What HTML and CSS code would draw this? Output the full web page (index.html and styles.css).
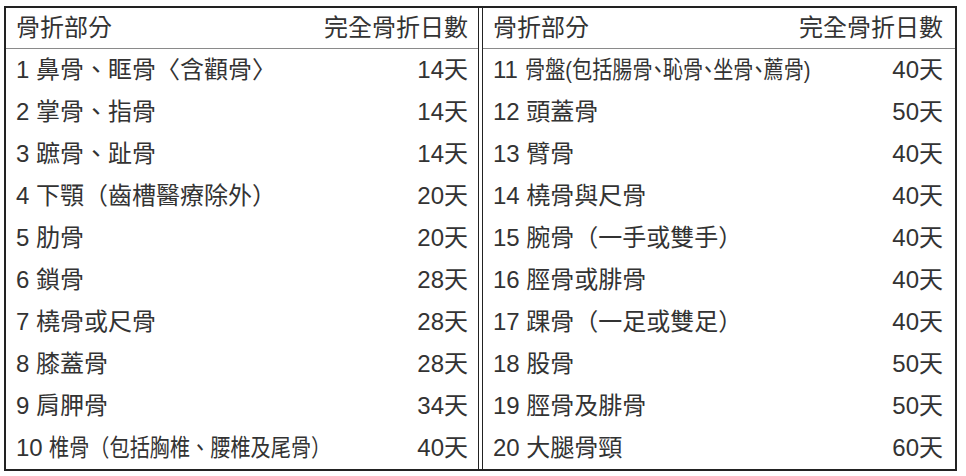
FILE: index.html
```html
<!DOCTYPE html>
<html lang="zh-Hant">
<head>
<meta charset="utf-8">
<title>骨折部分</title>
<link rel="stylesheet" href="styles.css">
</head>
<body>
<div class="sheet">
  <section class="half">
    <div class="row head"><span class="label">骨折部分</span><span class="days">完全骨折日數</span></div>
    <div class="row"><span class="label">1 鼻骨、眶骨〈含顴骨〉</span><span class="days">14天</span></div>
    <div class="row"><span class="label">2 掌骨、指骨</span><span class="days">14天</span></div>
    <div class="row"><span class="label">3 蹠骨、趾骨</span><span class="days">14天</span></div>
    <div class="row"><span class="label">4 下顎（齒槽醫療除外）</span><span class="days">20天</span></div>
    <div class="row"><span class="label">5 肋骨</span><span class="days">20天</span></div>
    <div class="row"><span class="label">6 鎖骨</span><span class="days">28天</span></div>
    <div class="row"><span class="label">7 橈骨或尺骨</span><span class="days">28天</span></div>
    <div class="row"><span class="label">8 膝蓋骨</span><span class="days">28天</span></div>
    <div class="row"><span class="label">9 肩胛骨</span><span class="days">34天</span></div>
    <div class="row"><span class="label">10 <span class="squeeze s10">椎骨（包括胸椎、腰椎及尾骨）</span></span><span class="days">40天</span></div>
  </section>
  <section class="half">
    <div class="row head"><span class="label">骨折部分</span><span class="days">完全骨折日數</span></div>
    <div class="row"><span class="label">11 <span class="squeeze s11">骨盤(包括腸骨、恥骨、坐骨、薦骨)</span></span><span class="days">40天</span></div>
    <div class="row"><span class="label">12 頭蓋骨</span><span class="days">50天</span></div>
    <div class="row"><span class="label">13 臂骨</span><span class="days">40天</span></div>
    <div class="row"><span class="label">14 橈骨與尺骨</span><span class="days">40天</span></div>
    <div class="row"><span class="label">15 腕骨（一手或雙手）</span><span class="days">40天</span></div>
    <div class="row"><span class="label">16 脛骨或腓骨</span><span class="days">40天</span></div>
    <div class="row"><span class="label">17 踝骨（一足或雙足）</span><span class="days">40天</span></div>
    <div class="row"><span class="label">18 股骨</span><span class="days">50天</span></div>
    <div class="row"><span class="label">19 脛骨及腓骨</span><span class="days">50天</span></div>
    <div class="row"><span class="label">20 大腿骨頸</span><span class="days">60天</span></div>
  </section>
</div>
</body>
</html>
```
FILE: styles.css
```css
html, body {
  margin: 0;
  padding: 0;
}
body {
  background: #ffffff;
  font-family: "Liberation Sans", "Noto Sans CJK TC", sans-serif;
  color: #333333;
  width: 966px;
  height: 476px;
  overflow: hidden;
}
.sheet {
  margin: 6px 0 0 4px;
  width: 953px;
  box-sizing: border-box;
  border: 2px solid #222222;
  display: grid;
  grid-template-columns: 1fr 1fr;
  column-gap: 3px;
  background: #ffffff;
}
.half {
  display: flex;
  flex-direction: column;
}
.half:first-child {
  border-right: 1px solid #222222;
}
.half:last-child {
  border-left: 1px solid #222222;
}
.row {
  display: flex;
  align-items: center;
  justify-content: space-between;
  height: 42px;
  padding: 0 10px 0 10px;
  font-size: 24px;
  line-height: 1;
  white-space: nowrap;
}
.half:last-child .row {
  padding-right: 12px;
}
.row.head {
  height: 40px;
  border-bottom: 1px solid #8a8a8a;
}
.label {
  flex: 1 1 auto;
  min-width: 0;
  overflow: visible;
}
.days {
  flex: none;
}
.squeeze {
  display: inline-block;
  transform-origin: left center;
}
.s10 {
  transform: scaleX(0.84);
}
.s11 {
  font-feature-settings: "palt" 1;
  transform: scaleX(0.84);
}
```
